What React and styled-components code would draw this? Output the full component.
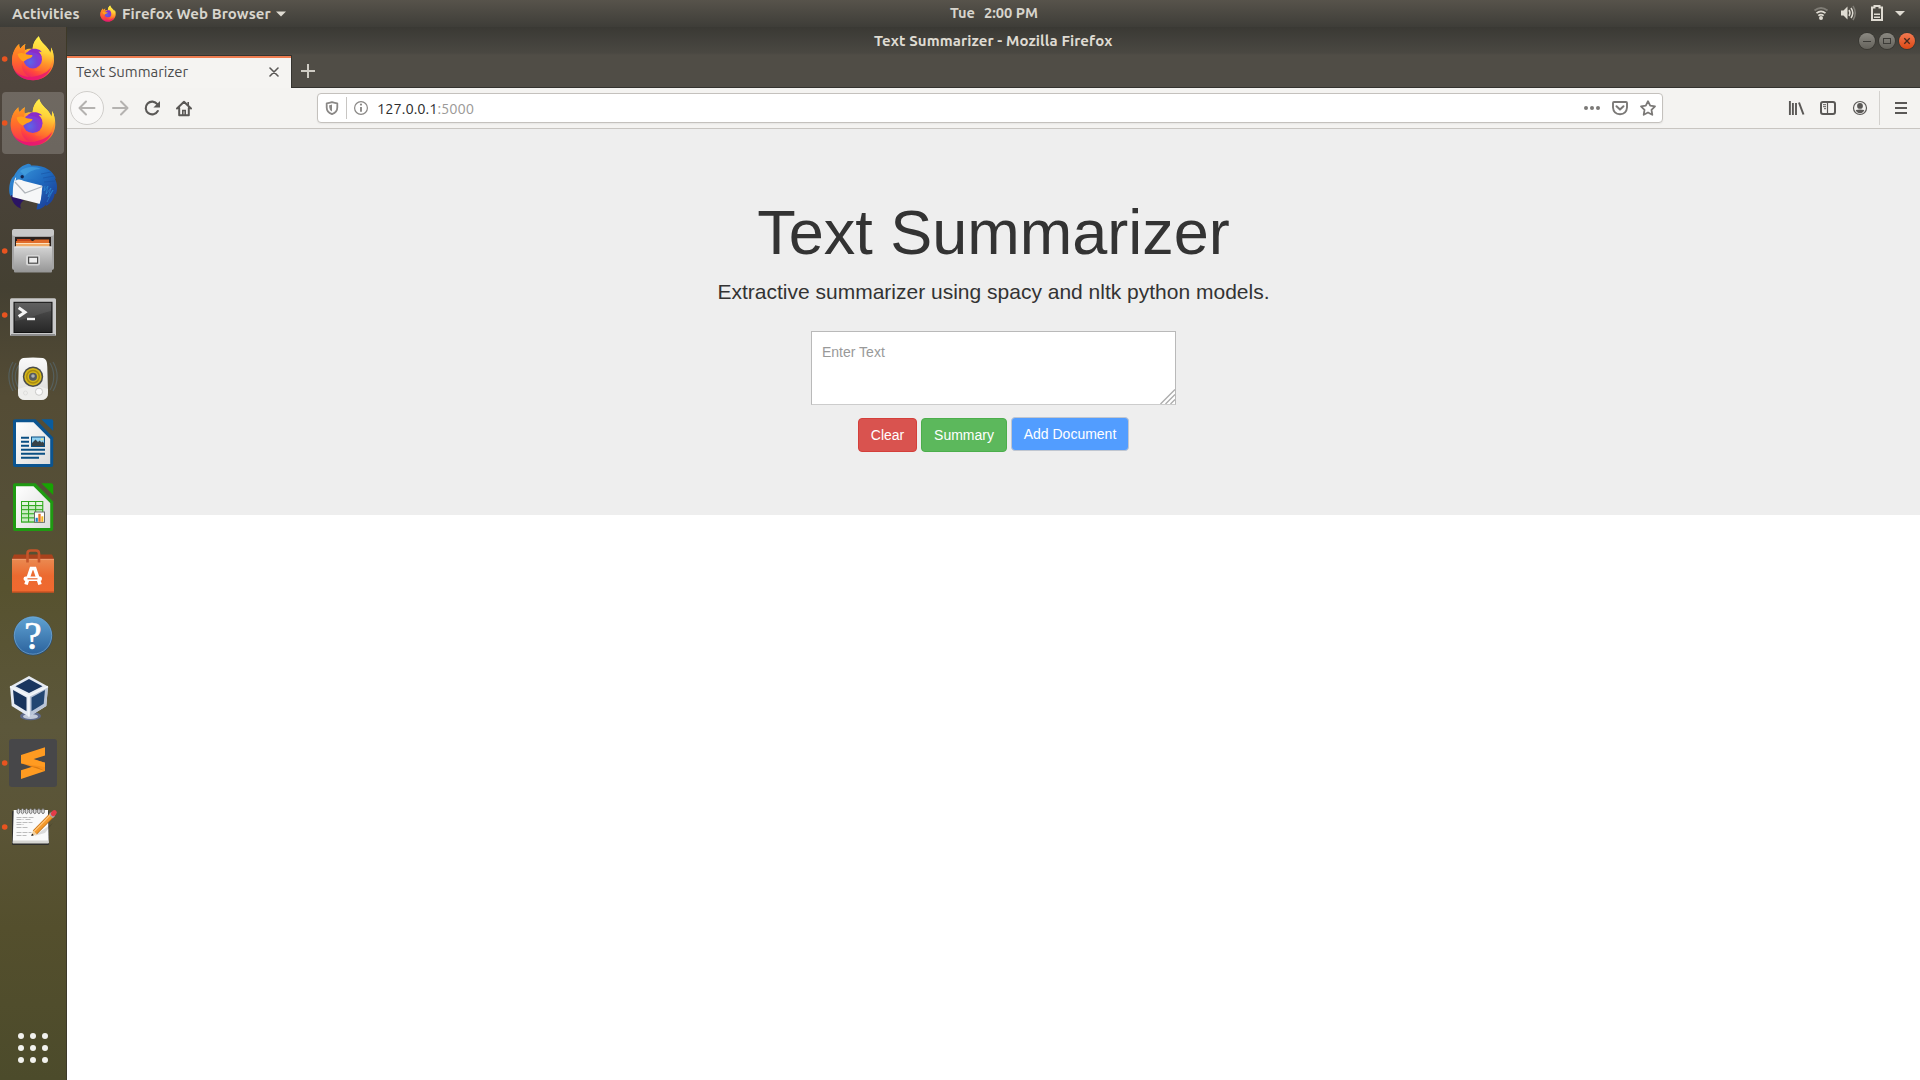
import React from "react";
import styled, { createGlobalStyle } from "styled-components";

const ui = `Ubuntu, "Noto Sans", "Open Sans", sans-serif`;

const Global = createGlobalStyle`
  * { box-sizing: border-box; }
  html, body { margin: 0; padding: 0; height: 1080px; overflow: hidden; background: #fff; }
  svg { display: block; flex: none; }
`;

const Desktop = styled.div`
  width: 1920px;
  height: 1080px;
  display: flex;
  flex-direction: column;
  font-family: ${ui};
`;

const TopBar = styled.header`
  height: 27px;
  flex: none;
  display: grid;
  grid-template-columns: 900px 188px 1fr;
  align-items: center;
  background: linear-gradient(#57534b, #3e3d38);
  color: #d8d5cd;
  font-size: 15px;
  font-weight: 600;
  white-space: pre;
  line-height: 26px;
`;
const TopLeft = styled.div`
  display: flex;
  align-items: center;
  padding-left: 12px;
`;
const Label = styled.span`
  width: ${(p) => p.$w}px;
  margin-left: ${(p) => p.$ml || 0}px;
  letter-spacing: ${(p) => p.$ls || 0}px;
  flex: none;
  white-space: pre;
`;
const Clock = styled.div`
  display: flex;
  padding: 0 0 1px 50px;
  font-size: 14.6px;
`;
const Tray = styled.div`
  display: flex;
  justify-content: flex-end;
`;

const Body = styled.div`
  flex: 1;
  min-height: 0;
  display: flex;
`;

const Dock = styled.nav`
  width: 67px;
  flex: none;
  display: flex;
  flex-direction: column;
  border-right: 1px solid #3d3928;
  background: linear-gradient(
    #51493f 0, #4b433b 120px, #444032 260px, #544c35 370px, #554f37 480px,
    #57522f 560px, #5c573b 700px, #5a5436 800px, #544f2d 900px, #4c4b2b 1053px
  );
`;
const DockItem = styled.div`
  height: 64px;
  flex: none;
  display: flex;
  padding: 1px 2px;
`;
const Tile = styled.div`
  width: 62px;
  height: 62px;
  border-radius: 4px;
  background: ${(p) => (p.$active ? "rgba(255,255,255,0.19)" : "transparent")};
  svg { margin: -1px -2px; }
`;
const AppsButton = styled.div`
  margin: auto 0 16px 17px;
  display: grid;
  grid-template-columns: repeat(3, 6px);
  gap: 6px;
  padding: 1px;
`;
const AppDot = styled.i`
  width: 6px;
  height: 6px;
  border-radius: 50%;
  background: #f2f2ee;
`;

const Window = styled.main`
  flex: 1;
  min-width: 0;
  display: flex;
  flex-direction: column;
  background: #fff;
`;
const Chrome = styled.div`
  height: 61px;
  flex: none;
  background: linear-gradient(#3a3934 0, #4a4842 26px, #504d46 28px, #504d46 60px, #33322e 60px);
`;
const TitleBar = styled.div`
  height: 28px;
  display: grid;
  grid-template-columns: 807px 1fr auto;
  color: #dfdbd2;
  font-size: 15px;
  font-weight: 700;
  line-height: 28px;
`;
const WinButtons = styled.div`
  display: flex;
  gap: 4px;
  padding: 6px 5px 0 0;
`;
const WinButton = styled.span`
  width: 16px;
  height: 16px;
  border-radius: 50%;
  background: ${(p) => (p.$close ? "linear-gradient(#f37a52, #dd4814)" : "linear-gradient(#8b8982, #64625b)")};
  box-shadow: 0 0 0 0.7px #35342f;
`;
const Tabs = styled.div`
  height: 33px;
  display: flex;
`;
const Tab = styled.div`
  width: 225px;
  display: flex;
  align-items: center;
  justify-content: space-between;
  padding: 0 12px 0 9px;
  border-top: 1px solid #35342f;
  border-right: 1px solid #35342f;
  background: linear-gradient(#ee7c50 2px, #f5f4f2 2px);
  color: #4c4c4c;
  font-size: 14.9px;
`;
const TabTitle = styled.span`
  padding-bottom: 2px;
  white-space: nowrap;
`;
const NewTab = styled.div`
  padding: 8px 0 0 9px;
`;

const NavBar = styled.div`
  height: 41px;
  flex: none;
  display: flex;
  align-items: center;
  background: #f4f3f1;
  border-bottom: 1px solid #c8c5c1;
`;
const NavButtons = styled.div`
  width: 250px;
  flex: none;
`;
const UrlBar = styled.div`
  width: 1346px;
  height: 30px;
  flex: none;
  display: flex;
  align-items: center;
  justify-content: space-between;
  border: 1px solid #c4c1bd;
  border-radius: 4px;
  background: #fff;
  box-shadow: 0 1px 2px rgba(0, 0, 0, 0.06);
`;
const UrlLeft = styled.div`
  display: flex;
  align-items: center;
  font-size: 14.67px;
  line-height: 24px;
  color: #2e2e2e;
  white-space: pre;
`;
const Url = styled.span`
  padding-top: 2px;
`;
const Port = styled.span`
  color: #9c9a98;
`;

const Jumbotron = styled.section`
  height: 386px;
  display: flex;
  flex-direction: column;
  align-items: center;
  padding-top: 69px;
  background: #eee;
  color: #333;
  font-family: "Liberation Sans", Arial, sans-serif;
`;
const Heading = styled.h1`
  margin: 0;
  font-size: 63px;
  font-weight: 400;
  line-height: 69px;
  white-space: nowrap;
`;
const Lead = styled.p`
  margin: 10px 0 0;
  font-size: 21px;
  line-height: 30px;
  white-space: nowrap;
`;
const Field = styled.div`
  position: relative;
  width: 365px;
  height: 74px;
  margin-top: 24px;
`;
const Area = styled.textarea`
  display: block;
  width: 100%;
  height: 100%;
  padding: 10px;
  border: 1px solid #b9b9b9;
  border-bottom-color: #ccc;
  background: #fff;
  color: #333;
  font: 14px/20px "Liberation Sans", Arial, sans-serif;
  resize: none;
  outline: none;
  &::placeholder { color: #999; opacity: 1; }
`;
const Grip = styled.svg`
  position: absolute;
  right: 1px;
  bottom: 1px;
`;
const Actions = styled.div`
  display: flex;
  align-items: flex-start;
  gap: 4px;
  margin-top: 12px;
`;
const Button = styled.button`
  width: ${(p) => p.$w}px;
  height: 34px;
  margin-top: ${(p) => p.$drop || 0}px;
  padding: 0;
  border: 1px solid ${(p) => p.$edge};
  border-radius: 4px;
  background: ${(p) => p.$fill};
  color: #fff;
  font: 14px/20px "Liberation Sans", Arial, sans-serif;
`;

const foxBody =
  "M38.8 9.3C35 12.5 32.8 17 32.6 22C29.5 21.3 27 22 25.2 23C24.6 21 24.8 18.8 25.4 17C23.2 18 21.6 20 20.6 21.6C19.4 20.6 19 18.6 19.2 17C14.6 21 12 27 12 34C12 45 21.5 53.2 33 53.2C45 53.2 54 44 54 33C54 28 53 24 51 20.6C51.2 22.4 51 24 50.4 26C47.6 18.4 40.6 16.4 38.8 9.3Z";

function Firefox() {
  return (
    <>
      <defs>
        <linearGradient id="foxA" x1="0.75" y1="0.1" x2="0.3" y2="1">
          <stop offset="0" stopColor="#fff04a" />
          <stop offset="0.3" stopColor="#ffbd2e" />
          <stop offset="0.55" stopColor="#ff7f25" />
          <stop offset="0.75" stopColor="#ff4340" />
          <stop offset="1" stopColor="#e0117b" />
        </linearGradient>
        <linearGradient id="foxB" x1="0.6" y1="0" x2="0.45" y2="1">
          <stop offset="0" stopColor="#fff44f" />
          <stop offset="0.45" stopColor="#ffd43a" />
          <stop offset="0.75" stopColor="#ff9a2a" />
          <stop offset="1" stopColor="#ff6a30" />
        </linearGradient>
        <radialGradient id="foxC" cx="0.35" cy="0.65" r="0.75">
          <stop offset="0" stopColor="#5b66e8" />
          <stop offset="0.5" stopColor="#7542d8" />
          <stop offset="1" stopColor="#9a2bd0" />
        </radialGradient>
        <linearGradient id="foxD" x1="0" y1="0" x2="0" y2="1">
          <stop offset="0" stopColor="#ff9a1f" />
          <stop offset="0.5" stopColor="#ff6a2c" />
          <stop offset="1" stopColor="#f7334f" />
        </linearGradient>
      </defs>
      <path d={foxBody} fill="url(#foxA)" />
      <path d="M19.2 17C14.600 21 12 27 12 34C12 43 19 50 29 50C22 45 20 39 23 32L25.200 23C24.600 21 24.800 18.800 25.400 17C23.200 18 21.600 20 20.600 21.600C19.400 20.600 19 18.600 19.200 17Z" fill="url(#foxD)" />
      <path d="M38.8 9.3C35 12.5 32.8 17 32.6 22C38 22 41 26 42 31C43 37 39 42 34 43C42 46 50 42 52.5 34C54 28 53 24 51 20.6C51.2 22.4 51 24 50.4 26C47.6 18.4 40.6 16.4 38.8 9.3Z" fill="url(#foxB)" />
      <circle cx="32.8" cy="32.300" r="9.2" fill="url(#foxC)" />
      <path d="M31 22.200C36 20.800 41 23 41.600 25.200C39.500 24.400 38.400 24.800 38.400 24.800C41.200 27 41.500 30 41.500 30C38 25.600 34 26 28 24.600Z" fill="#8a2cc9" />
      <path d="M17.500 27C22 25 24 26.200 27 27.400C29 28 32 27.600 32.600 28.400C32.400 30 29.600 31.400 27.600 32C25.600 33 25 34 23.400 34.400C21 33.500 18.500 31 17.500 27Z" fill="#ffa01c" />
      <path d="M13 40C18 50 30 52 41 47C49 43 52 37 53.500 30C55 44 45 53.300 33 53.300C22 53.300 14.500 47 13 40Z" fill="#ff5a3c" opacity="0.350" />
      <path d="M14 42.500C19 50 30 51.500 40 48C46 46 49 43 51.500 40C48 48.500 41 53.300 33 53.300C24 53.300 17 49 14 42.500Z" fill="#e4107a" opacity="0.750" />
    </>
  );
}

function Thunderbird() {
  return (
    <>
      <defs>
        <linearGradient id="tbA" x1="0" y1="0" x2="1" y2="1">
          <stop offset="0" stopColor="#3a97dc" />
          <stop offset="0.5" stopColor="#1f6abf" />
          <stop offset="1" stopColor="#1a3590" />
        </linearGradient>
      </defs>
      <path d="M26 9.500C28 8 31 8.600 31 10.600C43 9.600 53 15 56 24C54.600 23.400 54.600 23.600 54.600 23.600C57.600 28 57.600 35 56 39C55 39 54.600 38.400 54.600 38.400C54.400 44 50 49 46 51C45.600 50 45.800 49.600 45.800 49.600C43 53 40 54.500 36.500 54.600L38 47L12 42C10.500 41 9.700 40 9.400 38C8.600 32 10 24 14 21C17 15 21 11 26 9.500Z" fill="url(#tbA)" />
      <path d="M11 40L24 45.500C18.500 48 20.500 54 22 54C16 52 11.500 47 11 40Z" fill="#2a1463" />
      <path d="M15.500 22.500L24 26L43.500 31L40 49L12.500 42C13.400 37 12 30 15.500 22.500Z" fill="#f6f7f8" />
      <path d="M15 27L25 38L42.500 31.500" fill="none" stroke="#b0b5ba" strokeWidth="1.300" />
      <path d="M15.500 26C17 13 30 11.500 40 13C51 16 55.500 24 54.500 33C53 42 49 47 43 52C38 54 37.500 52 40 48C42.500 43 41 38 42.500 31C39 25 32 23.500 27 24.500C23 25.500 18 23 15.500 26Z" fill="url(#tbA)" />
      <path d="M45 31L44 36L48 31L46 39L51 33L48 42L53 35L47 47" fill="none" stroke="#2f9ade" strokeWidth="1" opacity="0.500" />
      <path d="M20 16C25 11 36 11 41 14C34 14 28 17 25 21Z" fill="#4aa6e2" opacity="0.600" />
      <path d="M41 19L51 17M43 23L54 21M44 27L55.500 26" stroke="#174f9f" strokeWidth="0.900" opacity="0.600" />
      <circle cx="22.200" cy="21.800" r="1.700" fill="#14244f" />
    </>
  );
}

function Files() {
  return (
    <>
      <defs>
        <linearGradient id="flA" x1="0" y1="0" x2="0" y2="1">
          <stop offset="0" stopColor="#d4d4d4" />
          <stop offset="1" stopColor="#959595" />
        </linearGradient>
      </defs>
      <rect x="12" y="10" width="42" height="41" rx="2.5" fill="#a5a5a5" />
      <rect x="12" y="10" width="42" height="7" rx="2.5" fill="#c8c8c8" />
      <rect x="15" y="18" width="36" height="12" fill="#2b211d" />
      <path d="M17 20h13l2 2h17v7H17z" fill="#c5461b" />
      <path d="M16 22h17l2-1.5h14V29H16z" fill="#e06c2a" />
      <path d="M16 24.5h33.5V30H16z" fill="#f2ac67" />
      <path d="M16 24.5h33.5" stroke="#fde0bd" />
      <rect x="14" y="27.6" width="38" height="26" rx="1" fill="url(#flA)" />
      <path d="M14.5 28h37" stroke="#eee" />
      <rect x="26" y="36" width="14" height="10.5" rx="2" fill="#d7d7d7" />
      <rect x="28.6" y="38.2" width="9" height="6" fill="#ededed" stroke="#4d4d4d" strokeWidth="1.2" />
    </>
  );
}

function Terminal() {
  return (
    <>
      <defs>
        <linearGradient id="tmA" x1="0" y1="0" x2="0" y2="1">
          <stop offset="0" stopColor="#555" />
          <stop offset="1" stopColor="#262626" />
        </linearGradient>
      </defs>
      <rect x="10" y="15.3" width="46" height="37.7" rx="1.5" fill="#c9c9c9" />
      <path d="M11 52h44" stroke="#8d8d8d" strokeWidth="2" />
      <rect x="14" y="19.3" width="38" height="30.2" fill="url(#tmA)" stroke="#111" />
      <path d="M15 20h36v8C40 30 30 36 15 38z" fill="#fff" opacity="0.08" />
      <path d="M18.700 24.800l6.300 4.400-6.300 4.400" fill="none" stroke="#f4f4f4" strokeWidth="3" />
      <path d="M27 36h8" stroke="#f4f4f4" strokeWidth="2.4" />
    </>
  );
}

function Speaker() {
  return (
    <>
      <defs>
        <linearGradient id="spA" x1="0" y1="0" x2="0" y2="1">
          <stop offset="0" stopColor="#fafafa" />
          <stop offset="1" stopColor="#d9d9d7" />
        </linearGradient>
      </defs>
      <g fill="none" stroke="#5c7f99" strokeWidth="1.2" opacity="0.4">
        <path d="M16 16C11 24 11 35 16 43M13 15C7.500 24 7.500 35 13 44M19 18C14 25 14 34 19 41" />
        <path d="M50 16C55 24 55 35 50 43M53 15C58.500 24 58.500 35 53 44" />
      </g>
      <path d="M23 11Q33 10 43 11Q47.500 12 47.300 20L48 45Q48 53 41 53H25Q18 53 18 45L18.700 20Q18.500 12 23 11Z" fill="url(#spA)" />
      <path d="M18 42Q33 36 48 42V45Q48 53 41 53H25Q18 53 18 45Z" fill="#eeeeec" />
      <circle cx="33" cy="29.700" r="10.200" fill="#4b4d4a" />
      <circle cx="33" cy="29.700" r="8.700" fill="#d4b619" />
      <circle cx="33" cy="29.700" r="6.300" fill="none" stroke="#a98b10" strokeWidth="1.500" />
      <circle cx="33" cy="29.700" r="4" fill="#575b5e" />
      <circle cx="33" cy="29" r="1.800" fill="#abb0b3" />
      <circle cx="39" cy="44.700" r="3.600" fill="#fafafa" stroke="#cacac8" />
      <circle cx="25.500" cy="46" r="2" fill="none" stroke="#dededc" />
    </>
  );
}

function OfficeDoc({ main, dark, id }) {
  return (
    <>
      <defs>
        <linearGradient id={id} x1="0" y1="0" x2="1" y2="1">
          <stop offset="0" stopColor="#fff" />
          <stop offset="1" stopColor="#dcdcdc" />
        </linearGradient>
      </defs>
      <path d="M15 8.300H35.500L53.200 26.500V54Q53.200 56 51.200 56H15Q13 56 13 54V10.300Q13 8.300 15 8.300Z" fill={main} />
      <path d="M41.300 8.300H51.200Q53.200 8.300 53.200 10.300V20Z" fill={dark} />
      <path d="M16 11.200H33.500L50.200 28V53H16Z" fill={`url(#${id})`} />
    </>
  );
}

function Writer() {
  return (
    <>
      <OfficeDoc id="wrA" main="#0b5490" dark="#0a5c9e" />
      <path d="M21 26.700h8M21 30.700h8M21 34.700h8M21 38.700h24M21 42.700h24M21 46.700h18" stroke="#0b4f83" strokeWidth="1.900" />
      <rect x="31.500" y="26" width="13" height="9.500" fill="#8fd0f1" stroke="#0b4f83" />
      <path d="M32 35V32l3.500-3.500 2.500 2.500 1.500-1.500 2 2 1-1L44 32v3z" fill="#384248" />
      <circle cx="42" cy="28.300" r="1.100" fill="#f5e37c" />
    </>
  );
}

function Calc() {
  return (
    <>
      <OfficeDoc id="caA" main="#1f9a12" dark="#18a303" />
      <rect x="21" y="26" width="22.300" height="21.700" fill="#31aa22" />
      {[0, 1, 2].map((c) =>
        [0, 1, 2, 3, 4].map((r) => (
          <rect key={`${c}${r}`} x={22 + c * 7.1} y={27 + r * 4.1} width="6" height="3" fill={r === 0 ? "#e4f6df" : "#cbecc5"} />
        ))
      )}
      <rect x="34.500" y="37" width="10" height="10.300" fill="#fff" stroke="#6a6a6a" />
      <path d="M36.700 46.800v-4" stroke="#1d81c4" strokeWidth="2.200" />
      <path d="M39.500 46.800v-8" stroke="#e8742a" strokeWidth="2.400" />
      <path d="M42.300 46.800v-5.500" stroke="#f2b41c" strokeWidth="2" />
    </>
  );
}

function Software() {
  return (
    <>
      <defs>
        <linearGradient id="swA" x1="0" y1="0" x2="0" y2="1">
          <stop offset="0" stopColor="#ea8a51" />
          <stop offset="0.5" stopColor="#ec6a30" />
          <stop offset="1" stopColor="#f0692f" />
        </linearGradient>
      </defs>
      <path d="M14 15.500H52L54 20V53H12V20Z" fill="#a9421c" />
      <path d="M12 20H54V53.500H12Z" fill="url(#swA)" />
      <path d="M12 20.300H54" stroke="#f4a37c" strokeWidth="0.800" />
      <path d="M12 53H54" stroke="#b8481d" />
      <path d="M27.500 23.500V14.500Q27.500 11.500 30.500 11.500H36Q39 11.500 39 14.500V23.500" fill="none" stroke="#c5552b" strokeWidth="2.600" />
      <path d="M26 45.500L31.300 29.500H34.700L40 45.500" fill="none" stroke="#fff" strokeWidth="3.600" />
      <rect x="23.500" y="37.500" width="18.500" height="4.500" rx="2.200" fill="#fff" />
      <path d="M27.500 39.800h10" stroke="#ee7540" strokeWidth="1.300" />
    </>
  );
}

function Help() {
  return (
    <>
      <defs>
        <linearGradient id="hpA" x1="0" y1="0" x2="0" y2="1">
          <stop offset="0" stopColor="#5fa2d3" />
          <stop offset="1" stopColor="#2c639d" />
        </linearGradient>
      </defs>
      <circle cx="33" cy="33" r="19.500" fill="#264e79" />
      <circle cx="33" cy="32.500" r="18.700" fill="url(#hpA)" stroke="#7aaed6" strokeWidth="0.700" />
      <text x="33" y="46.300" textAnchor="middle" fontFamily="Liberation Serif, serif" fontSize="39" fill="#fff" stroke="#fff" strokeWidth="0.700">?</text>
    </>
  );
}

function VirtualBox() {
  return (
    <>
      <ellipse cx="30.500" cy="49" rx="10.500" ry="4.300" fill="#5f6a8c" />
      <ellipse cx="30.500" cy="49.500" rx="7.500" ry="2.400" fill="#c3cad9" />
      <path d="M29 9L10 19.500L11.700 39L29 49.800L46.300 39L48 19.500Z" fill="#e6ebf3" />
      <path d="M29 29V49.800L46.300 39L48 19.500Z" fill="#b9c4d8" />
      <path d="M29 12L15.500 19.300L29 26L42.500 19.300Z" fill="#19355f" />
      <path d="M13 23L26.500 30.500V44.300L14.300 36.800Z" fill="#17335c" />
      <path d="M45 23L31.500 30.500V44.300L43.700 36.800Z" fill="#234672" />
      <path d="M10 19.500L29 29L48 19.500M29 29V49.500" fill="none" stroke="#f3f6fa" strokeWidth="1.700" />
    </>
  );
}

function Sublime() {
  return (
    <>
      <rect x="9" y="8" width="48" height="48" rx="3" fill="#474749" />
      <path d="M21 39.300L45 31.700V40L21 48Z" fill="#ff9b21" />
      <path d="M21 24V32.300L45 40V31.700Z" fill="#f7901c" />
      <path d="M21 32.300L45 40L37 36L30 35Z" fill="#d97a10" />
      <path d="M45 16.300V24.500L33 28.300L45 31.700V36L21 32.300V24Z" fill="#ff9b21" />
    </>
  );
}

function Notes() {
  return (
    <>
      <rect x="12" y="16" width="37" height="34" rx="1" fill="#2e2e2b" />
      <path d="M13.700 15H48L48.700 48H12.700Z" fill="#fafafa" />
      <path d="M13 45.500H48.500V48.500H12.800Z" fill="#d6d6d2" />
      {[0, 1, 2, 3, 4, 5, 6].map((i) => (
        <ellipse key={i} cx={18.4 + i * 4.1} cy="16.200" rx="1.400" ry="2.500" fill="#d9d9d9" stroke="#6f6f6f" strokeWidth="0.900" />
      ))}
      <path d="M16.500 22.500h17M16.500 24.500h7m2 0h6M16.500 27.500h16M16.500 29.500h7M16.500 32.500h12M16.500 37.500h15M16.500 40.500h10" stroke="#b4b4b4" strokeWidth="0.900" strokeDasharray="5 1" />
      <path d="M34 41L45 38L53 28Z" fill="#000" opacity="0.12" />
      <path d="M34.800 37.500L52 20" stroke="#b86710" strokeWidth="5.500" />
      <path d="M34.800 37.500L52 20" stroke="#f49a2c" strokeWidth="4.200" />
      <path d="M34 36.500L50.500 19.600" stroke="#ffc57b" strokeWidth="1.200" />
      <path d="M31.500 40.700L33 35.400L37 39.300Z" fill="#f1cf9d" />
      <path d="M31.300 41L32 38.500L33.800 40.200Z" fill="#111" />
      <path d="M50.800 21.200L53.300 18.700" stroke="#a8a8a8" strokeWidth="5.500" />
      <path d="M53.200 18.700L54.400 17.500" stroke="#e43b48" strokeWidth="4.800" strokeLinecap="round" />
    </>
  );
}

const apps = [
  { Icon: Firefox, dot: true },
  { Icon: Firefox, dot: true, active: true },
  { Icon: Thunderbird },
  { Icon: Files, dot: true },
  { Icon: Terminal, dot: true },
  { Icon: Speaker },
  { Icon: Writer },
  { Icon: Calc },
  { Icon: Software },
  { Icon: Help },
  { Icon: VirtualBox },
  { Icon: Sublime, dot: true },
  { Icon: Notes, dot: true },
];

function DockApp({ Icon, dot, active }) {
  return (
    <DockItem>
      <Tile $active={active}>
        <svg width="66" height="64" viewBox="0 0 66 64">
          {dot && <circle cx="4.700" cy="32" r="2.800" fill="#e95420" />}
          <g transform={active ? "translate(33 31.500) scale(1.060) translate(-33 -31.500)" : undefined}>
            <Icon />
          </g>
        </svg>
      </Tile>
    </DockItem>
  );
}

function TrayIcons() {
  return (
    <svg width="110" height="27" viewBox="1810 0 110 27" fill="none">
      <path d="M1814.500 10.500Q1821 5.500 1827.500 10.500" stroke="#7f7c75" strokeWidth="2" />
      <path d="M1816.500 13.200Q1821 9.500 1825.500 13.200M1818.300 15.700Q1821 13.500 1823.700 15.700" stroke="#dfdbd2" strokeWidth="1.700" />
      <circle cx="1821" cy="18" r="2" fill="#dfdbd2" />
      <path d="M1841 10.500h2.500l4-4V19.500l-4-4H1841z" fill="#dfdbd2" />
      <path d="M1849 10q2 3 0 6M1851 8q3.500 5 0 10" stroke="#dfdbd2" strokeWidth="1.500" />
      <path d="M1853 6q4.500 7 0 14" stroke="#7f7c75" strokeWidth="1.500" />
      <path d="M1872 7.500h2.500V6h5v1.500h2.500V20h-10z" stroke="#dfdbd2" strokeWidth="2" />
      <path d="M1874 14.200h6M1874 17.200h6" stroke="#dfdbd2" strokeWidth="1.500" />
      <path d="M1895 11h10l-5 5z" fill="#dfdbd2" />
    </svg>
  );
}

function NavIcons() {
  return (
    <svg width="250" height="40" viewBox="67 88 250 40" fill="none">
      <circle cx="87" cy="108" r="16.500" fill="#f9f8f7" stroke="#d0cecb" />
      <path d="M94.500 108H80M86 101.500L79.500 108L86 114.500" stroke="#b4b2b0" strokeWidth="2" strokeLinecap="round" strokeLinejoin="round" />
      <path d="M113 108H127M121 101.500L127.500 108L121 114.500" stroke="#b4b2b0" strokeWidth="2" strokeLinecap="round" strokeLinejoin="round" />
      <path d="M157.300 104.200A6.400 6.400 0 1 0 157.800 111" stroke="#5a5856" strokeWidth="2.100" strokeLinecap="round" />
      <path d="M160 101V107.600H153.400Z" fill="#5a5856" />
      <path d="M177 108.500L184 101.800L191 108.500M179.200 108V115.200H188.800V108" stroke="#5a5856" strokeWidth="2" strokeLinecap="round" strokeLinejoin="round" />
      <path d="M182.800 115V110.500H185.200V115" stroke="#5a5856" strokeWidth="1.600" />
      <path d="M188.200 102V105" stroke="#5a5856" strokeWidth="1.600" />
    </svg>
  );
}

function IdentityIcons() {
  return (
    <svg width="59" height="28" viewBox="318 94 59 28" fill="none">
      <path d="M332 102.200Q335 103.300 337.300 103.300V107.500Q337.300 112.300 332 114.200Q326.700 112.300 326.700 107.500V103.300Q329 103.300 332 102.200Z" stroke="#8a8886" strokeWidth="1.800" strokeLinejoin="round" />
      <path d="M332 104.500V111.500Q329.200 110 329.200 107V105.200Q330.600 105.200 332 104.500Z" fill="#8a8886" />
      <path d="M346.500 97V119" stroke="#c8c6c3" />
      <circle cx="361" cy="108" r="6.400" stroke="#8a8886" strokeWidth="1.200" />
      <path d="M361 107V111.800" stroke="#8a8886" strokeWidth="1.900" />
      <circle cx="361" cy="104.600" r="1.100" fill="#8a8886" />
    </svg>
  );
}

function PageActions() {
  return (
    <svg width="82" height="28" viewBox="1580 94 82 28" fill="none">
      <g fill="#7b7977">
        <circle cx="1586" cy="108" r="2" />
        <circle cx="1592" cy="108" r="2" />
        <circle cx="1598" cy="108" r="2" />
      </g>
      <path d="M1614 102H1626Q1627 102 1627 103V107.500Q1626.500 114 1620 114.200Q1613.500 114 1613 107.500V103Q1613 102 1614 102Z" stroke="#7b7977" strokeWidth="1.900" />
      <path d="M1616.500 106.300L1620 109.600L1623.500 106.300" stroke="#7b7977" strokeWidth="2" strokeLinecap="round" strokeLinejoin="round" />
      <path d="M1648 101.200L1650.200 105.700L1655 106.400L1651.500 109.800L1652.300 114.800L1648 112.500L1643.700 114.800L1644.500 109.800L1641 106.400L1645.800 105.700Z" stroke="#7b7977" strokeWidth="1.800" strokeLinejoin="round" />
    </svg>
  );
}

function ToolbarIcons() {
  return (
    <svg width="257" height="40" viewBox="1663 88 257 40" fill="none" stroke="#5a5856">
      <path d="M1789.900 101V115M1792.900 103V115M1796 103V115" strokeWidth="1.900" />
      <path d="M1799 102.500L1803.500 114.500" strokeWidth="2" />
      <rect x="1821" y="102" width="14" height="12" rx="2" strokeWidth="2" />
      <path d="M1827.500 102V114" strokeWidth="1.200" />
      <path d="M1823 104.700h3M1823 106.700h3M1824 108.700h2" strokeWidth="1" />
      <circle cx="1860" cy="108" r="6.500" strokeWidth="1.200" />
      <circle cx="1860" cy="105.900" r="2.900" fill="#5a5856" stroke="none" />
      <path d="M1855.700 110Q1860 108.800 1864.300 110Q1863.500 113 1860 113.300Q1856.500 113 1855.700 110Z" fill="#5a5856" stroke="none" />
      <path d="M1879.500 91V125" stroke="#d3d1ce" />
      <path d="M1895 103H1907M1895 108H1907M1895 113H1907" strokeWidth="2" />
    </svg>
  );
}

export default function App() {
  return (
    <Desktop>
      <Global />
      <TopBar>
        <TopLeft>
          <Label $w={88} $ls={0.1}>Activities</Label>
          <svg width="16" height="17" viewBox="11 8 44 46">
            <Firefox />
          </svg>
          <Label $w={154} $ml={6} $ls={0.08}>Firefox Web Browser</Label>
          <svg width="10" height="6" viewBox="0 0 10 6">
            <path d="M0 0.500h10l-5 5z" fill="#dfdbd2" />
          </svg>
        </TopLeft>
        <Clock>
          <Label $w={34}>Tue</Label>
          <Label $w={60}>2:00 PM</Label>
        </Clock>
        <Tray>
          <TrayIcons />
        </Tray>
      </TopBar>
      <Body>
        <Dock>
          {apps.map((a, i) => (
            <DockApp key={i} {...a} />
          ))}
          <AppsButton>
            {Array.from({ length: 9 }, (_, i) => (
              <AppDot key={i} />
            ))}
          </AppsButton>
        </Dock>
        <Window>
          <Chrome>
            <TitleBar>
              <span />
              <Label $w={260} $ls={0.09}>Text Summarizer - Mozilla Firefox</Label>
              <WinButtons>
                <WinButton>
                  <svg width="16" height="16"><path d="M4 8.500h8" stroke="#3c3b37" /></svg>
                </WinButton>
                <WinButton>
                  <svg width="16" height="16"><rect x="4.500" y="5.500" width="7" height="5" fill="none" stroke="#3c3b37" /></svg>
                </WinButton>
                <WinButton $close>
                  <svg width="16" height="16"><path d="M5.300 5.300l5.400 5.400M10.700 5.300l-5.400 5.400" stroke="#46291d" strokeWidth="1.300" /></svg>
                </WinButton>
              </WinButtons>
            </TitleBar>
            <Tabs>
              <Tab>
                <TabTitle>Text Summarizer</TabTitle>
                <svg width="10" height="10"><path d="M1 1l8 8M9 1l-8 8" stroke="#5a5856" strokeWidth="1.600" strokeLinecap="round" /></svg>
              </Tab>
              <NewTab>
                <svg width="14" height="16"><path d="M0 8h14M7 1v14" stroke="#cfccc4" strokeWidth="2" /></svg>
              </NewTab>
            </Tabs>
          </Chrome>
          <NavBar>
            <NavButtons>
              <NavIcons />
            </NavButtons>
            <UrlBar>
              <UrlLeft>
                <IdentityIcons />
                <Url>127.0.0.1<Port>:5000</Port></Url>
              </UrlLeft>
              <PageActions />
            </UrlBar>
            <ToolbarIcons />
          </NavBar>
          <Jumbotron>
            <Heading>Text Summarizer</Heading>
            <Lead>Extractive summarizer using spacy and nltk python models.</Lead>
            <Field>
              <Area placeholder="Enter Text" />
              <Grip width="15" height="15" viewBox="0 0 15 15">
                <path d="M0.500 15L15 0.500M5.500 15L15 5.500M10.500 15L15 10.500" stroke="#adadad" strokeWidth="1.400" />
              </Grip>
            </Field>
            <Actions>
              <Button $w={59} $drop={1} $fill="#d9534f" $edge="#d43f3a">Clear</Button>
              <Button $w={86} $drop={1} $fill="#5cb85c" $edge="#4cae4c">Summary</Button>
              <Button $w={118} $fill="#529dff" $edge="#c0c6d0">Add Document</Button>
            </Actions>
          </Jumbotron>
        </Window>
      </Body>
    </Desktop>
  );
}
